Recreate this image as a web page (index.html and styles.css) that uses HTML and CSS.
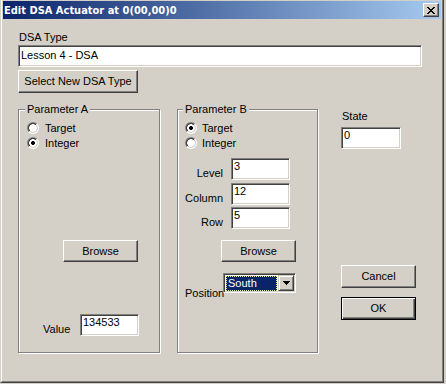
FILE: index.html
```html
<!DOCTYPE html>
<html>
<head>
<meta charset="utf-8">
<link rel="stylesheet" href="styles.css">
</head>
<body>
<div class="window">
  <div class="frame">
    <div class="titlebar">
      <span class="title">Edit DSA Actuator at 0(00,00)0</span>
      <div class="close"><svg width="8" height="7" viewBox="0 0 8 7" shape-rendering="crispEdges"><path fill="#000" d="M0 0h2v1H0z M6 0h2v1H6z M1 1h2v1H1z M5 1h2v1H5z M2 2h4v1H2z M3 3h2v1H3z M2 4h4v1H2z M1 5h2v1H1z M5 5h2v1H5z M0 6h2v1H0z M6 6h2v1H6z"/></svg></div>
    </div>
    <div class="client">
      <div class="label dsa-label">DSA Type</div>
      <div class="edit dsa-edit">Lesson 4 - DSA</div>
      <div class="btn select-btn">Select New DSA Type</div>
      <div class="main">
        <div class="group group-a">
          <span class="legend">Parameter A</span>
          <div class="radios">
            <div class="radio"><span class="rb"></span>Target</div>
            <div class="radio"><span class="rb checked"></span>Integer</div>
          </div>
          <div class="btn browse browse-a">Browse</div>
          <div class="value-row">
            <span class="label value-label">Value</span>
            <div class="edit value-edit">134533</div>
          </div>
        </div>
        <div class="group group-b">
          <span class="legend">Parameter B</span>
          <div class="radios">
            <div class="radio"><span class="rb checked"></span>Target</div>
            <div class="radio"><span class="rb"></span>Integer</div>
          </div>
          <div class="fields">
            <span class="label">Level</span><div class="edit">3</div>
            <span class="label">Column</span><div class="edit">12</div>
            <span class="label">Row</span><div class="edit">5</div>
          </div>
          <div class="btn browse browse-b">Browse</div>
          <div class="pos-row">
            <span class="label pos-label">Position</span>
            <div class="combo">
              <div class="combo-sel">South</div>
              <div class="combo-arrow"><svg width="7" height="4" viewBox="0 0 7 4" shape-rendering="crispEdges"><path fill="#000" d="M0 0h7v1H0z M1 1h5v1H1z M2 2h3v1H2z M3 3h1v1H3z"/></svg></div>
            </div>
          </div>
        </div>
        <div class="side">
          <span class="label state-label">State</span>
          <div class="edit state-edit">0</div>
          <div class="btn side-btn cancel">Cancel</div>
          <div class="btn side-btn ok default">OK</div>
        </div>
      </div>
    </div>
  </div>
</div>
</body>
</html>
```

FILE: styles.css
```css
* { box-sizing: border-box; }
html, body { margin: 0; padding: 0; }
body {
  background: #d4d0c8;
  font-family: "Liberation Sans", Arial, sans-serif;
  font-size: 11px;
  line-height: 13px;
  color: #000;
  width: 446px;
  height: 384px;
  overflow: hidden;
}
.window {
  width: 444px;
  height: 383px;
  border: 1px solid;
  border-top: 0;
  border-color: #d4d0c8 #404040 #404040 #d4d0c8;
  background: #d4d0c8;
}
.frame {
  height: 100%;
  border: 1px solid;
  border-top: 0;
  border-color: #fff #808080 #808080 #fff;
  padding: 1px;
  display: flex;
  flex-direction: column;
}
.titlebar {
  height: 18px;
  flex: none;
  display: flex;
  align-items: center;
  justify-content: space-between;
  background: linear-gradient(to right, #0a246a, #a6caf0);
  padding: 0 2px 0 1px;
}
.title {
  font-family: "DejaVu Sans Condensed", "DejaVu Sans", sans-serif;
  font-stretch: condensed;
  font-weight: bold;
  font-size: 11px;
  line-height: 18px;
  color: #fff;
  white-space: nowrap;
  padding-top: 1px;
}
.close {
  width: 16px;
  height: 14px;
  display: flex;
  align-items: center;
  justify-content: center;
  background: #d4d0c8;
  border: 1px solid;
  border-color: #fff #404040 #404040 #fff;
  box-shadow: inset -1px -1px #808080;
}
.close svg { display: block; }
.client {
  display: flex;
  flex-direction: column;
  align-items: flex-start;
  padding-left: 15px;
}
.label { white-space: nowrap; }
.dsa-label { margin: 12px 0 0 1px; }
.edit {
  background: #fff;
  border: 1px solid;
  border-color: #808080 #fff #fff #808080;
  box-shadow: inset 1px 1px #404040, inset -1px -1px #d4d0c8;
  padding: 1px 0 0 2px;
  white-space: nowrap;
  overflow: hidden;
}
.dsa-edit { width: 404px; height: 22px; margin-top: 1px; padding-top: 3px; }
.btn {
  display: flex;
  align-items: center;
  justify-content: center;
  background: #d4d0c8;
  border: 1px solid;
  border-color: #fff #404040 #404040 #fff;
  box-shadow: inset -1px -1px #808080;
  white-space: nowrap;
}
.btn.default {
  border-color: #000;
  box-shadow: inset 1px 1px #fff, inset -1px -1px #404040, inset -2px -2px #808080;
}
.select-btn { width: 120px; height: 23px; margin-top: 3px; }
.main {
  display: flex;
  align-items: flex-start;
  margin-top: 16px;
}
.group {
  border: 1px solid #808080;
  box-shadow: 1px 1px #fff, inset 1px 1px #fff;
  height: 244px;
  display: flex;
  flex-direction: column;
  align-items: flex-start;
}
.group-a { width: 142px; }
.group-b { width: 141px; margin-left: 17px; }
.legend {
  margin: -7px 0 0 6px;
  padding: 0 2px;
  background: #d4d0c8;
  white-space: nowrap;
}
.group-b .legend { margin-left: 5px; }
.radios {
  margin: 6px 0 0 8px;
  display: flex;
  flex-direction: column;
  gap: 3px;
}
.group-b .radios { margin-left: 7px; }
.radio {
  display: flex;
  align-items: center;
  height: 12px;
  gap: 6px;
}
.group-b .radio { gap: 5px; }
.rb {
  flex: none;
  width: 12px;
  height: 12px;
  border-radius: 50%;
  display: flex;
  align-items: center;
  justify-content: center;
  background: linear-gradient(135deg, #808080 50%, #fff 50%);
}
.rb::before {
  content: "";
  width: 10px;
  height: 10px;
  border-radius: 50%;
  background: radial-gradient(circle, #fff 3.6px, transparent 4px), linear-gradient(135deg, #404040 50%, #d4d0c8 50%);
}
.rb.checked::before {
  background: radial-gradient(circle, #000 1.8px, #fff 2.2px, #fff 3.6px, transparent 4px), linear-gradient(135deg, #404040 50%, #d4d0c8 50%);
}
.browse { width: 75px; height: 22px; }
.browse-a { margin: 91px 0 0 44px; }
.value-row {
  display: flex;
  align-items: flex-end;
  margin: 52px 0 0 24px;
}
.value-label { width: 37px; }
.value-edit { width: 59px; height: 22px; }
.fields {
  display: grid;
  grid-template-columns: 45px 59px;
  grid-auto-rows: 22px;
  column-gap: 8px;
  row-gap: 2.5px;
  margin-top: 9px;
}
.fields .label { justify-self: end; align-self: end; }
.browse-b { margin: 11px 0 0 43px; }
.pos-row {
  display: flex;
  align-items: flex-start;
  margin-top: 11px;
}
.pos-label { width: 38px; margin: 14px 0 0 7px; }
.combo {
  width: 73px;
  height: 20px;
  display: flex;
  background: #fff;
  border: 1px solid;
  border-color: #808080 #fff #fff #808080;
  box-shadow: inset 1px 1px #404040, inset -1px -1px #d4d0c8;
  padding: 1px;
}
.combo-sel {
  flex: 1;
  margin: 1px 1px 0 1px;
  height: 15px;
  background: #0a246a;
  color: #fff;
  border: 1px dotted #e8dc9a;
  padding-left: 1px;
  white-space: nowrap;
}
.combo-arrow {
  width: 16px;
  height: 16px;
  flex: none;
  display: flex;
  align-items: center;
  justify-content: center;
  background: #d4d0c8;
  border: 1px solid;
  border-color: #d4d0c8 #404040 #404040 #d4d0c8;
  box-shadow: inset 1px 1px #fff, inset -1px -1px #808080;
}
.combo-arrow svg { display: block; }
.side {
  margin-left: 23px;
  display: flex;
  flex-direction: column;
  align-items: flex-start;
}
.state-label { margin: 1px 0 0 1px; }
.state-edit { width: 60px; height: 22px; margin-top: 4px; }
.side-btn { width: 75px; height: 23px; }
.cancel { margin-top: 116px; }
.ok { margin-top: 9px; }
```
